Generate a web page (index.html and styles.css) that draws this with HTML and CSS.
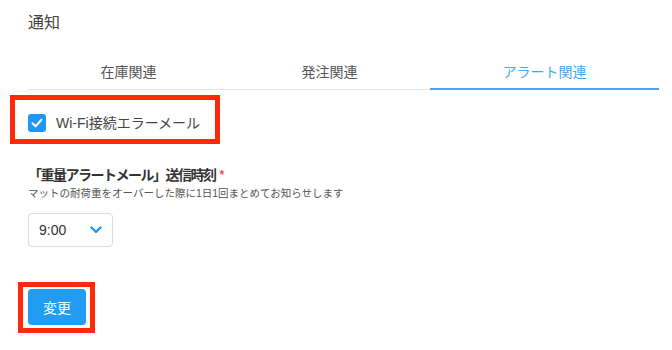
FILE: index.html
```html
<!DOCTYPE html>
<html lang="ja">
    <head>
        <meta charset="UTF-8" />
        <meta name="viewport" content="width=device-width, initial-scale=1.0" />
        <title>通知</title>
        <link rel="stylesheet" href="styles.css">
    </head>
    <body>
        <div class="page">
            <h2 class="title">通知</h2>
            <div class="tabs">
                <div class="tab">在庫関連</div>
                <div class="tab">発注関連</div>
                <div class="tab active">アラート関連</div>
            </div>

            <div class="mark mark-check">
                <label class="check">
                    <span class="box">
                        <svg width="12" height="10" viewBox="0 0 12 10">
                            <path d="M1.5 5.2 L4.6 8.2 L10.5 1.8" fill="none" stroke="#fff" stroke-width="2" stroke-linecap="round" stroke-linejoin="round" />
                        </svg>
                    </span>
                    <span class="check-text">Wi-Fi接続エラーメール</span>
                </label>
            </div>

            <div class="field">
                <div class="field-label">「重量アラートメール」送信時刻<span class="req">*</span></div>
                <div class="field-note">マットの耐荷重をオーバーした際に1日1回まとめてお知らせします</div>
                <div class="select">
                    <span class="select-val">9:00</span>
                    <svg class="chev" width="12" height="8" viewBox="0 0 12 8">
                        <path d="M1.5 1.5 L6 6 L10.5 1.5" fill="none" stroke="#2196f3" stroke-width="2.4" stroke-linecap="round" stroke-linejoin="round" />
                    </svg>
                </div>
            </div>

            <div class="mark mark-btn">
                <button class="btn">変更</button>
            </div>
        </div>
    </body>
</html>
```

FILE: styles.css
```css
* {
    margin: 0px;
    padding: 0px;
    box-sizing: border-box;
}
body {
    font-family: "Liberation Sans", "Noto Sans CJK JP", sans-serif;
    color: #333;
    background-color: #fff;
}
.page {
    padding: 12px 13px 0 28px;
}
.title {
    font-size: 16px;
    line-height: 22px;
    font-weight: normal;
    color: #444;
}

/* タブ */
.tabs {
    display: flex;
    margin-top: 20px;
    border-bottom: 1px solid #e4e4e4;
}
.tab {
    flex: 1 1 auto;
    text-align: center;
    font-size: 14px;
    line-height: 20px;
    padding: 8px 0 6px;
    color: #555;
}
.tab.active {
    color: #48a6ef;
    border-bottom: 2px solid #42a5f5;
    margin-bottom: -1px;
}

/* 赤枠 */
.mark {
    display: inline-flex;
    border: 5px solid #ff2a0a;
}
.mark-check {
    margin-top: 5px;
    margin-left: -18px;
    padding: 14px 15px 7px 13px;
}
.mark-btn {
    margin-top: 35px;
    margin-left: -10px;
    padding: 2px 4px 3px 5px;
}

/* チェックボックス */
.check {
    display: flex;
    align-items: center;
}
.box {
    width: 18px;
    height: 18px;
    border-radius: 3px;
    background-color: #2196f3;
    display: flex;
    align-items: center;
    justify-content: center;
}
.check-text {
    margin-left: 10px;
    font-size: 14px;
    line-height: 18px;
    color: #444;
}

/* 送信時刻 */
.field {
    margin-top: 21px;
}
.field-label {
    font-size: 14px;
    line-height: 20px;
    font-weight: bold;
    letter-spacing: -1.5px;
    color: #333;
}
.req {
    color: #f05050;
    font-size: 12px;
    margin-left: 4px;
    vertical-align: top;
}
.field-note {
    margin-top: 1px;
    font-size: 10.5px;
    line-height: 14px;
    color: #555;
}
.select {
    margin-top: 13px;
    width: 85px;
    height: 34px;
    border: 1px solid #dcdcdc;
    border-radius: 4px;
    display: flex;
    align-items: center;
    padding-left: 10px;
}
.select-val {
    font-size: 14px;
    color: #333;
}
.chev {
    margin-left: 24px;
}

/* ボタン */
.btn {
    width: 58px;
    height: 36px;
    border: none;
    border-radius: 4px;
    background-color: #229cf2;
    color: #fff;
    font-family: "Liberation Sans", "Noto Sans CJK JP", sans-serif;
    font-size: 14px;
}
```
